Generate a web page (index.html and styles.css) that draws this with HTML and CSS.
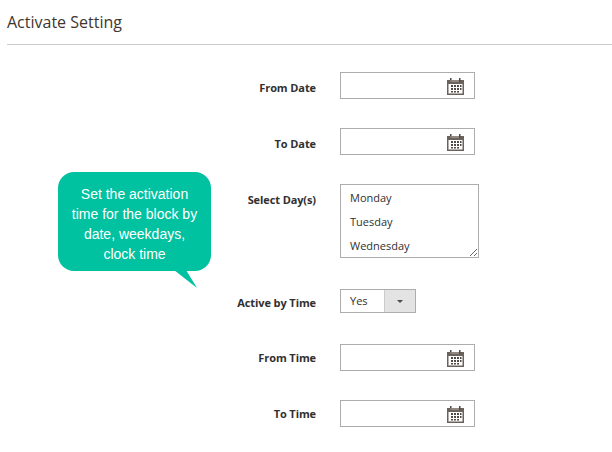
FILE: index.html
```html
<!DOCTYPE html>
<html lang="en">

<head>
    <meta charset="UTF-8">
    <meta name="viewport" content="width=device-width, initial-scale=1.0">
    <title>Activate Setting</title>
    <link rel="stylesheet" href="styles.css">
</head>

<body>
    <svg class="defs" width="0" height="0">
        <symbol id="cal" viewBox="0 0 17 17">
            <path fill="#6b625b" d="M0 2h17v15H0z"/>
            <path fill="#514943" d="M3 0h1.500v4H3zM12 0h1.500v4H12z"/>
            <path fill="#fff" d="M3 2.500h9v1H3z" opacity=".5"/>
            <path fill="#fff" d="M1.500 6h14v9.500h-14z"/>
            <path fill="#514943" d="M4 7h2v2H4zM7 7h2v2H7zM10 7h2v2h-2zM13 7h1.500v2H13zM4 10h2v2H4zM7 10h2v2H7zM10 10h2v2h-2zM13 10h1.500v2H13zM4 13h2v1.500H4zM7 13h2v1.500H7zM10 13h2v1.500h-2z"/>
        </symbol>
    </svg>

    <div class="panel">
        <h2 class="panelTitle">Activate Setting</h2>

        <form class="fields">
            <div class="field fieldLow">
                <label class="fieldLabel">From Date</label>
                <div class="dateBox">
                    <input type="text" class="dateInput">
                    <svg class="calIcon"><use href="#cal"/></svg>
                </div>
            </div>
            <div class="field fieldLow">
                <label class="fieldLabel">To Date</label>
                <div class="dateBox">
                    <input type="text" class="dateInput">
                    <svg class="calIcon"><use href="#cal"/></svg>
                </div>
            </div>
            <div class="field fieldTop">
                <label class="fieldLabel">Select Day(s)</label>
                <textarea class="dayList">Monday
Tuesday
Wednesday</textarea>
            </div>
            <div class="field fieldSelect">
                <label class="fieldLabel">Active by Time</label>
                <div class="selectBox">
                    <span class="selectValue">Yes</span>
                    <span class="selectArrow"></span>
                </div>
            </div>
            <div class="field">
                <label class="fieldLabel">From Time</label>
                <div class="dateBox">
                    <input type="text" class="dateInput">
                    <svg class="calIcon"><use href="#cal"/></svg>
                </div>
            </div>
            <div class="field">
                <label class="fieldLabel">To Time</label>
                <div class="dateBox">
                    <input type="text" class="dateInput">
                    <svg class="calIcon"><use href="#cal"/></svg>
                </div>
            </div>
        </form>

        <div class="bubble">Set the activation time for the block by date, weekdays, clock time</div>
    </div>
</body>

</html>
```
FILE: styles.css
```css
html, body {
    margin: 0;
    padding: 0;
    background: #fff;
}
body {
    font-family: "Open Sans", sans-serif;
    color: #303030;
    height: 452px;
    overflow: hidden;
}
.defs {
    position: absolute;
}

.panel {
    position: relative;
    padding: 0 0 0 7px;
}
.panelTitle {
    margin: 0;
    height: 44px;
    box-sizing: content-box;
    border-bottom: 1px solid #ccc;
    font-size: 16px;
    font-weight: 400;
    line-height: 45px;
    color: #41362f;
}

/*--------------------------*/
.fields {
    display: flex;
    flex-direction: column;
    gap: 29px;
    padding-top: 27px;
}
.field {
    display: flex;
    align-items: center;
    gap: 24px;
}
.fieldTop {
    align-items: flex-start;
}
.fieldTop .fieldLabel {
    padding-top: 8px;
}
.fieldLow .fieldLabel {
    padding-top: 5px;
}
.fieldSelect {
    margin: 2px 0;
}
.fieldSelect .fieldLabel {
    padding-top: 3px;
}
.fieldLabel {
    width: 309px;
    text-align: right;
    font-size: 11px;
    font-weight: 700;
    line-height: 16px;
    letter-spacing: -.1px;
    color: #303030;
}

.dateBox {
    width: 135px;
    height: 27px;
    position: relative;
}
.dateInput {
    display: block;
    width: 100%;
    height: 100%;
    box-sizing: border-box;
    border: 1px solid #adadad;
    background: #fff;
    padding: 0 10px;
    margin: 0;
    outline: 0;
}
.calIcon {
    position: absolute;
    top: 6px;
    right: 11px;
    width: 17px;
    height: 17px;
}

.dayList {
    display: block;
    width: 139px;
    height: 74px;
    box-sizing: border-box;
    border: 1px solid #adadad;
    margin: 0;
    padding: 1px 9px;
    font-family: "Open Sans", sans-serif;
    font-size: 11px;
    line-height: 24px;
    color: #303030;
    overflow: hidden;
    outline: 0;
}

.selectBox {
    display: flex;
    width: 76px;
    height: 24px;
    box-sizing: border-box;
    border: 1px solid #adadad;
    font-size: 11px;
    line-height: 21px;
    color: #303030;
}
.selectValue {
    flex: 1;
    padding-left: 9px;
}
.selectArrow {
    width: 30px;
    background: #e3e3e3;
    border-left: 1px solid #ccc;
    display: flex;
    align-items: center;
    justify-content: center;
}
.selectArrow:after {
    content: "";
    border-top: 3px solid #514943;
    border-left: 3px solid transparent;
    border-right: 3px solid transparent;
}

/* callout sits over the form */
.bubble {
    position: absolute;
    left: 58px;
    top: 172px;
    width: 153px;
    height: 99px;
    box-sizing: border-box;
    padding: 12px 12px;
    background: #00c1a0;
    border-radius: 16px;
    font-family: "Liberation Sans", Arial, sans-serif;
    font-size: 14px;
    line-height: 20px;
    text-align: center;
    color: #fff;
}
.bubble:after {
    content: "";
    position: absolute;
    left: 116px;
    top: 98px;
    width: 24px;
    height: 19px;
    background: #00c1a0;
    clip-path: polygon(0 0, 12px 0, 23px 18px);
}
```
